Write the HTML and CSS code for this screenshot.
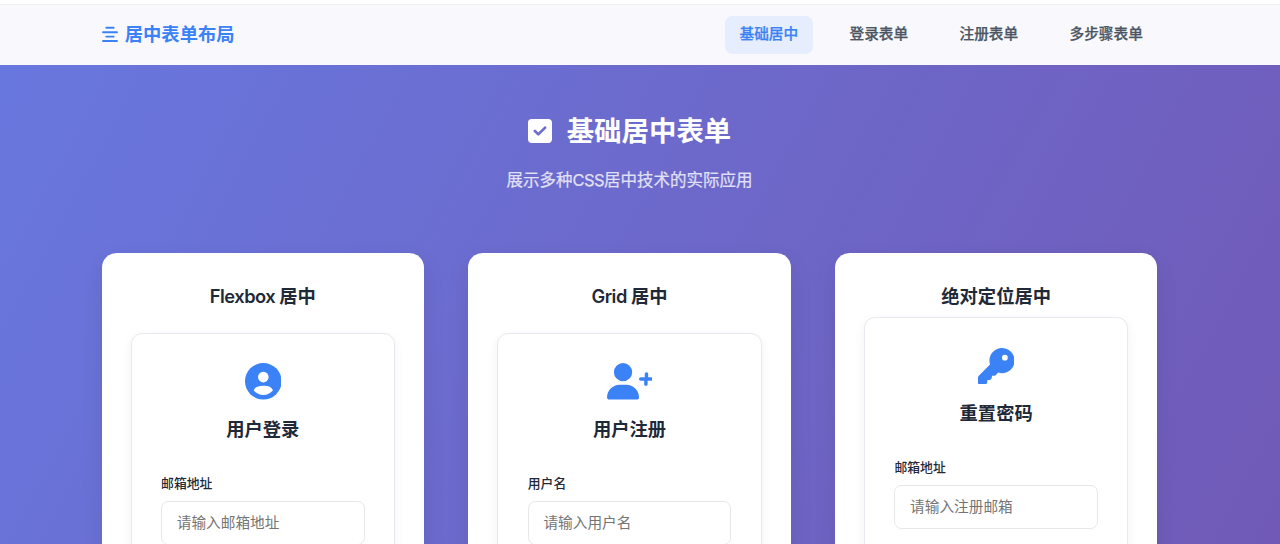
FILE: index.html
```html
<!DOCTYPE html>
<html lang="zh-CN">
<head>
<meta charset="utf-8">
<title>居中表单布局</title>
<link rel="stylesheet" href="styles.css">
</head>
<body>
<header class="navbar">
  <div class="nav-inner">
    <a class="brand">
      <svg class="brand-icon" viewBox="0 0 16 17" fill="none" stroke="currentColor" stroke-width="1.9" stroke-linecap="round"><path d="M4.3 1.800h7.400M1 6.200h14M4.300 10.600h7.400M1 15h14"/></svg>
      <span>居中表单布局</span>
    </a>
    <nav class="nav-links">
      <a class="nav-link active">基础居中</a>
      <a class="nav-link">登录表单</a>
      <a class="nav-link">注册表单</a>
      <a class="nav-link">多步骤表单</a>
    </nav>
  </div>
</header>
<main class="main">
  <section class="hero">
    <h1 class="hero-title">
      <svg class="hero-icon" viewBox="0 0 448 448"><path fill="currentColor" fill-rule="evenodd" d="M64 0C28.700 0 0 28.700 0 64V384c0 35.300 28.700 64 64 64H384c35.300 0 64-28.700 64-64V64c0-35.300-28.700-64-64-64H64zM337 177L209 305c-9.400 9.400-24.600 9.400-33.900 0l-64-64c-9.400-9.400-9.400-24.600 0-33.900s24.600-9.400 33.900 0l47 47L303 143c9.400-9.400 24.600-9.400 33.900 0s9.400 24.600 0 33.900z"/></svg>
      <span>基础居中表单</span>
    </h1>
    <p class="hero-sub">展示多种<span class="latin">CSS</span>居中技术的实际应用</p>
  </section>
  <section class="cards">
    <article class="card">
      <h2 class="card-title"><span class="latin">Flexbox </span>居中</h2>
      <div class="form">
        <svg class="form-icon" viewBox="0 0 40 40"><circle cx="20" cy="20" r="20" fill="#3b82f6"/><circle cx="20" cy="15.400" r="5.800" fill="#fff"/><path d="M9.500 30c1.200-3.500 5-5 10.500-5s9.300 1.500 10.500 5c-2.700 3-6.200 5-10.500 5s-7.800-2-10.500-5z" fill="#fff"/></svg>
        <h3 class="form-title">用户登录</h3>
        <label class="label">邮箱地址</label>
        <input class="input" placeholder="请输入邮箱地址">
      </div>
    </article>
    <article class="card">
      <h2 class="card-title"><span class="latin">Grid </span>居中</h2>
      <div class="form">
        <svg class="form-icon wide" viewBox="0 0 640 512"><path fill="#3b82f6" d="M96 128a128 128 0 1 1 256 0A128 128 0 1 1 96 128zM0 482.300C0 383.800 79.800 304 178.300 304h91.400C368.200 304 448 383.800 448 482.300c0 16.400-13.300 29.700-29.700 29.700H29.700C13.300 512 0 498.700 0 482.300zM520 296V248H472c-13.300 0-24-10.700-24-24s10.700-24 24-24h56V152c0-13.300 10.700-24 24-24s24 10.700 24 24v48h40c13.300 0 24 10.700 24 24s-10.700 24-24 24H568v48c0 13.300-10.700 24-24 24s-24-10.700-24-24z"/></svg>
        <h3 class="form-title">用户注册</h3>
        <label class="label">用户名</label>
        <input class="input" placeholder="请输入用户名">
      </div>
    </article>
    <article class="card">
      <h2 class="card-title tight">绝对定位居中</h2>
      <div class="form">
        <svg class="form-icon" viewBox="0 0 512 512"><path fill="#3b82f6" d="M336 352c97.200 0 176-78.800 176-176S433.200 0 336 0S160 78.800 160 176c0 18.700 2.900 36.800 8.300 53.700L18 380c-12 12-18 22-18 38v70c0 13.300 10.700 24 24 24h68c18 0 34-12 36-30l4-34h20c20 0 36-12 40-32l4-26h24c10 0 20-3 27-10l35.300-36.300c16.900 5.400 35 8.300 53.700 8.300zM376 96a40 40 0 1 1 0 80 40 40 0 1 1 0-80z"/></svg>
        <h3 class="form-title">重置密码</h3>
        <label class="label">邮箱地址</label>
        <input class="input" placeholder="请输入注册邮箱">
      </div>
    </article>
  </section>
</main>
</body>
</html>
```
FILE: styles.css
```css
* { box-sizing: border-box; margin: 0; padding: 0; }

body {
  height: 544px;
  overflow: hidden;
  display: flex;
  flex-direction: column;
  font-family: Inter, "Noto Sans CJK SC", sans-serif;
  font-size: 14.66px;
  line-height: 1.6;
  color: #1f2937;
  background: linear-gradient(118deg, #6878df 0%, #715ab7 100%);
}

.navbar {
  flex: none;
  height: 65px;
  padding: 0 122.500px 0 101.500px;
  background: #f9f9fd;
  border-top: 4px solid #fff;
  box-shadow: inset 0 1px 0 #ededf0;
}

.nav-inner {
  height: 61px;
  padding-top: 1px;
  display: flex;
  align-items: center;
  justify-content: space-between;
}

.brand {
  display: flex;
  align-items: center;
  gap: 7.300px;
  font-size: 18.300px;
  font-weight: 600;
  color: #3b82f6;
}

.brand-icon { width: 16px; height: 17px; }

.nav-links { display: flex; gap: 22px; }

.nav-link {
  padding: 7.500px 14.700px;
  border-radius: 7.300px;
  font-weight: 500;
  color: #4b5563;
  -webkit-text-stroke: .25px currentColor;
}

.nav-link.active {
  color: #3b82f6;
  background: #e6edfc;
}

.main {
  flex: 1;
  min-height: 0;
  overflow: hidden;
  padding: 44px 122.500px 0 101.500px;
}

.hero {
  height: 144px;
  text-align: center;
  color: #fff;
}

.hero-title {
  display: flex;
  justify-content: center;
  align-items: center;
  gap: 15px;
  font-size: 27.450px;
  font-weight: 700;
  line-height: 44px;
}

.hero-icon { width: 24px; height: 24px; }

.hero-sub {
  margin-top: 14px;
  font-size: 16.500px;
  line-height: 26px;
  opacity: .8;
  -webkit-text-stroke: .2px currentColor;
}

.latin { letter-spacing: -.5px; }

.cards {
  display: grid;
  grid-template-columns: repeat(3, 1fr);
  gap: 44px;
}

.card {
  height: 420px;
  padding: 29.300px;
  border-radius: 14.700px;
  background: #fff;
  box-shadow: 0 9px 23px rgba(0, 0, 0, .08);
}

.card-title {
  margin-bottom: 21.600px;
  font-size: 18.300px;
  font-weight: 600;
  line-height: 29.300px;
  text-align: center;
}

.card-title.tight { margin-bottom: 5.700px; }

.form {
  height: 380px;
  padding: 29.300px;
  border: 1px solid #e6eaee;
  border-radius: 11px;
  background: #fff;
  box-shadow: 0 4px 11px rgba(0, 0, 0, .06);
}

.form-icon {
  display: block;
  width: 36.600px;
  height: 36.600px;
  margin: 0 auto 14.700px;
}

.form-icon.wide { width: 45.800px; }

.form-title {
  margin-bottom: 29.500px;
  font-size: 18.300px;
  font-weight: 600;
  line-height: 29.300px;
  text-align: center;
}

.label {
  display: block;
  margin-bottom: 7px;
  font-size: 12.830px;
  font-weight: 500;
  line-height: 20.500px;
}

.input {
  display: block;
  width: 100%;
  height: 43.500px;
  padding: 0 14.700px;
  border: 1px solid #e5e7eb;
  border-radius: 7.300px;
  background: #fff;
  font: inherit;
}

.input::placeholder { color: #757575; }
```
